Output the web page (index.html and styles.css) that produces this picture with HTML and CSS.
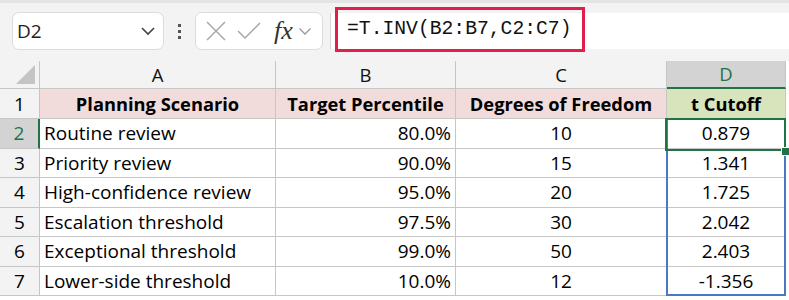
FILE: index.html
```html
<!DOCTYPE html>
<html lang="en">
<head>
    <meta charset="UTF-8">
    <title>T.INV</title>
    <link rel="stylesheet" href="styles.css">
</head>
<body>
    <!-- Barre de formule -->
    <div class="toolbar">
        <div class="namebox">
            <span>D2</span>
            <svg width="16" height="10" viewBox="0 0 16 10"><path d="M2 2 L8 8 L14 2" fill="none" stroke="#444" stroke-width="1.6"/></svg>
        </div>
        <div class="dots"><i></i><i></i><i></i></div>
        <div class="fxbox">
            <svg width="22" height="22" viewBox="0 0 22 22"><path d="M2 2 L20 20 M20 2 L2 20" stroke="#a8a8a8" stroke-width="1.5" fill="none"/></svg>
            <svg width="24" height="22" viewBox="0 0 24 22"><path d="M1 11 L8 18 L23 3" stroke="#a8a8a8" stroke-width="1.5" fill="none"/></svg>
            <span class="fx">fx</span>
            <svg width="14" height="10" viewBox="0 0 14 10"><path d="M1.5 2.5 L7 8 L12.5 2.5" fill="none" stroke="#999" stroke-width="1.3"/></svg>
        </div>
        <div class="formula">
            <div class="formula-text">=T.INV(B2:B7,C2:C7)</div>
        </div>
    </div>

    <!-- Feuille -->
    <div class="sheet">
        <div class="hdr corner"><span class="tri"></span></div>
        <div class="hdr">A</div>
        <div class="hdr">B</div>
        <div class="hdr">C</div>
        <div class="hdr hdr-sel">D</div>
        <div class="hdr filler"></div>

        <div class="rn">1</div>
        <div class="c title">Planning Scenario</div>
        <div class="c title">Target Percentile</div>
        <div class="c title">Degrees of Freedom</div>
        <div class="c title green">t Cutoff</div>
        <div class="filler"></div>

        <div class="rn rn-sel">2</div>
        <div class="c">Routine review</div>
        <div class="c num">80.0%</div>
        <div class="c mid">10</div>
        <div class="c mid">0.879</div>
        <div class="filler"></div>

        <div class="rn">3</div>
        <div class="c">Priority review</div>
        <div class="c num">90.0%</div>
        <div class="c mid">15</div>
        <div class="c mid">1.341</div>
        <div class="filler"></div>

        <div class="rn">4</div>
        <div class="c">High-confidence review</div>
        <div class="c num">95.0%</div>
        <div class="c mid">20</div>
        <div class="c mid">1.725</div>
        <div class="filler"></div>

        <div class="rn">5</div>
        <div class="c">Escalation threshold</div>
        <div class="c num">97.5%</div>
        <div class="c mid">30</div>
        <div class="c mid">2.042</div>
        <div class="filler"></div>

        <div class="rn">6</div>
        <div class="c">Exceptional threshold</div>
        <div class="c num">99.0%</div>
        <div class="c mid">50</div>
        <div class="c mid">2.403</div>
        <div class="filler"></div>

        <div class="rn">7</div>
        <div class="c">Lower-side threshold</div>
        <div class="c num">10.0%</div>
        <div class="c mid">12</div>
        <div class="c mid">-1.356</div>
        <div class="filler"></div>

        <!-- sélection -->
        <div class="range"></div>
        <div class="active"></div>
        <div class="handle"></div>
    </div>
</body>
</html>
```

FILE: styles.css
```css
        body {
            margin: 0;
            font-family: "Open Sans", "Liberation Sans", sans-serif;
            background-color: #fff;
            color: #000;
            width: 789px;
            height: 300px;
            overflow: hidden;
        }

        /* Barre de formule */
        .toolbar {
            height: 61px;
            background-color: #f3f3f3;
            border-top: 3px solid #e4e4e4;
            box-sizing: border-box;
            display: flex;
            align-items: flex-start;
        }

        .namebox {
            margin: 9px 0 0 12px;
            width: 152px;
            height: 38px;
            box-sizing: border-box;
            background-color: #fff;
            border: 1px solid #dcdcdc;
            border-radius: 7px;
            display: flex;
            align-items: center;
            justify-content: space-between;
            padding: 0 7px 0 4px;
            font-family: "Open Sans", sans-serif;
            font-size: 19px;
            color: #222;
        }

        .dots {
            width: 31px;
            height: 38px;
            margin-top: 9px;
            display: flex;
            flex-direction: column;
            align-items: center;
            justify-content: center;
            gap: 3px;
        }

        .dots i {
            width: 3px;
            height: 3px;
            background-color: #555;
        }

        .fxbox {
            margin-top: 9px;
            width: 128px;
            height: 38px;
            box-sizing: border-box;
            background-color: #fff;
            border: 1px solid #dcdcdc;
            border-radius: 7px;
            display: flex;
            align-items: center;
            padding: 0 4px 0 9px;
            gap: 10px;
        }

        .fx {
            font-family: "Liberation Serif", serif;
            font-style: italic;
            font-size: 26px;
            line-height: 30px;
            color: #333;
            margin-left: 3px;
            margin-right: -5px;
        }

        .formula {
            flex: 1;
            margin: 10px 0 0 7px;
            height: 36px;
            background-color: #fff;
            border-left: 1px solid #d8d8d8;
            padding-left: 4px;
        }

        .formula-text {
            width: 250px;
            height: 45px;
            margin-top: -6px;
            box-sizing: border-box;
            border: 3px solid #e0204a;
            font-family: "Liberation Mono", monospace;
            font-size: 19.7px;
            line-height: 39px;
            padding-left: 9px;
            color: #111;
        }

        /* Feuille */
        .sheet {
            position: relative;
            display: grid;
            grid-template-columns: 40px 236px 180px 211px 119px 3px;
            grid-template-rows: 28px 30px repeat(6, 29.5px);
            font-family: "Open Sans", sans-serif;
            font-size: 19px;
        }

        .hdr {
            background-color: #f3f3f3;
            border-right: 1px solid #c6c6c6;
            border-bottom: 1px solid #c6c6c6;
            text-align: center;
            line-height: 27px;
            font-size: 18.5px;
            color: #111;
        }

        .hdr-sel {
            background-color: #d3d3d3;
            color: #217346;
            border-bottom: 2px solid #217346;
            line-height: 26px;
        }

        .corner {
            position: relative;
        }

        .tri {
            position: absolute;
            right: 4px;
            bottom: 4px;
            width: 0;
            height: 0;
            border-left: 19px solid transparent;
            border-bottom: 19px solid #c4c4c4;
        }

        .filler {
            background-color: #fff;
            border-bottom: none;
            border-right: none;
        }

        .rn {
            background-color: #f3f3f3;
            border-right: 1px solid #c6c6c6;
            border-bottom: 1px solid #c6c6c6;
            text-align: center;
            font-size: 19px;
            display: flex;
            align-items: center;
            justify-content: center;
        }

        .rn-sel {
            background-color: #d3d3d3;
            color: #217346;
            border-right: 2px solid #217346;
        }

        .c {
            border-right: 1px solid #c6c6c6;
            border-bottom: 1px solid #c6c6c6;
            display: flex;
            align-items: center;
            padding: 0 4px;
            white-space: nowrap;
            overflow: hidden;
        }

        .num {
            justify-content: flex-end;
        }

        .mid {
            justify-content: center;
        }

        .title {
            background-color: #f2dcdb;
            font-weight: bold;
            font-size: 18.3px;
            justify-content: center;
        }

        .green {
            background-color: #d8e4bc;
        }

        .range {
            position: absolute;
            left: 666px;
            top: 57px;
            width: 120px;
            height: 178px;
            box-sizing: border-box;
            border: 2px solid #4a78c2;
        }

        .active {
            position: absolute;
            left: 665px;
            top: 57px;
            width: 121px;
            height: 33px;
            box-sizing: border-box;
            border: 2px solid #217346;
        }

        .handle {
            position: absolute;
            left: 781px;
            top: 86px;
            width: 7px;
            height: 7px;
            background-color: #217346;
            border: 1px solid #fff;
        }
```
